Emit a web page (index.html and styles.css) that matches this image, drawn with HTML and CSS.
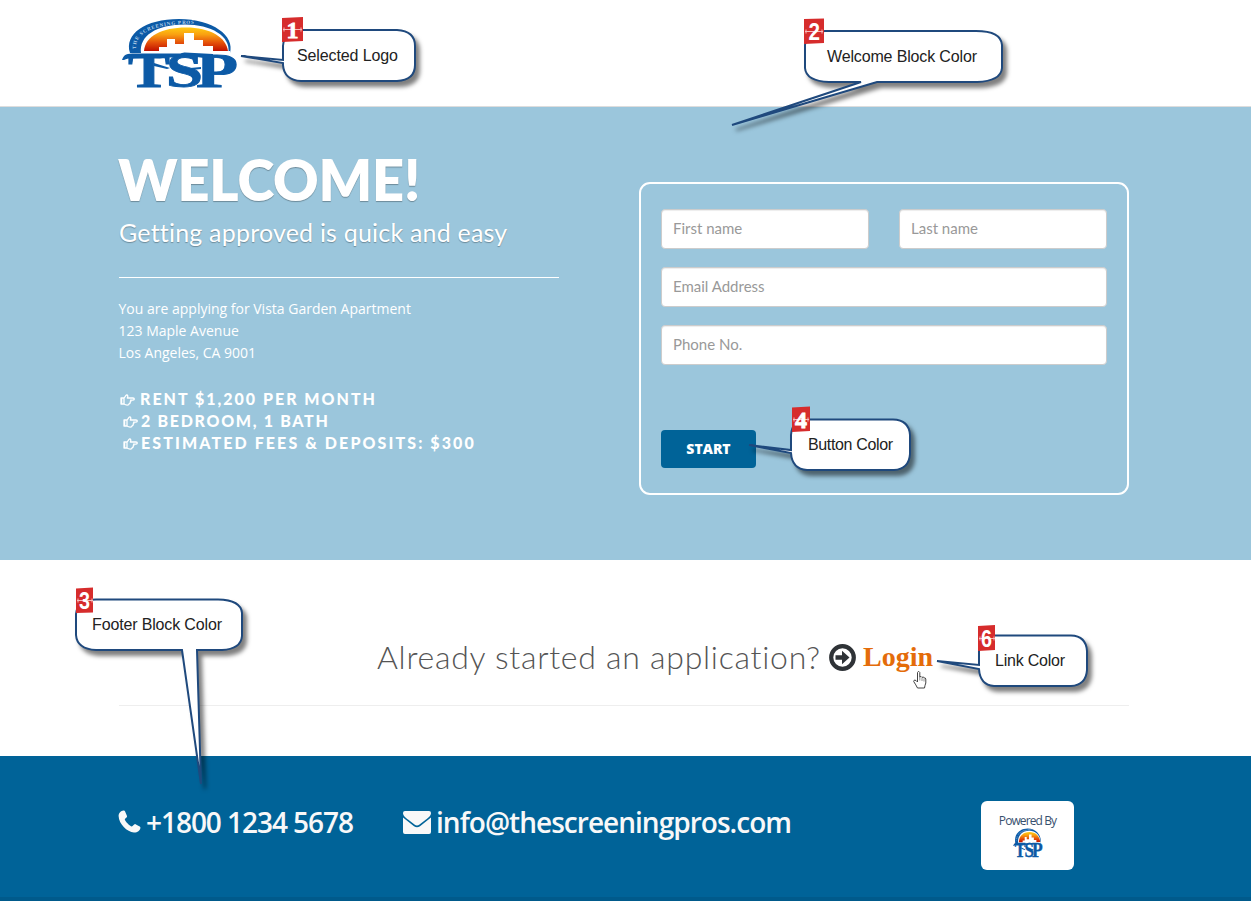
FILE: index.html
```html
<!DOCTYPE html>
<html lang="en">
<head>
<meta charset="utf-8">
<title>Welcome</title>
<link rel="stylesheet" href="styles.css">
</head>
<body>
<svg class="defs" width="0" height="0" aria-hidden="true">
  <defs>
    <linearGradient id="sunset" x1="0" y1="0" x2="0" y2="1">
      <stop offset="0" stop-color="#ffcb12"/><stop offset=".3" stop-color="#f9a011"/>
      <stop offset=".65" stop-color="#e4500a"/><stop offset="1" stop-color="#c01000"/>
    </linearGradient>
    <path id="arc" d="M15 31C13 15 35 4.500 78 6"/>
    <symbol id="logo" viewBox="0 0 118 72" preserveAspectRatio="none">
      <path d="M9 35C3 16 24 1 58 1c34 0 56 17 51 34h-1.500C110 18 90 6.500 64 6.500 35 6.500 18 18 20 35Z" fill="#0c5aa6"/>
      <path d="M23 33C24 18 41 9.500 65 9.500s40 9.500 42 23.500Z" fill="url(#sunset)"/>
      <path d="M38 36V29H46V21h8v5h9V15h10v7h9v6h10v5h17v4H23v-2h15Z" fill="#fff"/>
      <text class="logo-arc"><textPath href="#arc" textLength="70">THE SCREENING PROS</textPath></text>
      <path d="M1 42C3 36 6 35.500 14 35.500h44c4 0 3-1 6-1l28 1.500v2.500H60v1H45l-6 1H15c-7 0-8-.5-12 1.500Z" fill="#0c5aa6"/>
      <g class="logo-letters">
        <text x="7" y="68.500" textLength="42" lengthAdjust="spacingAndGlyphs">T</text>
        <text x="45" y="68.500" textLength="37" lengthAdjust="spacingAndGlyphs">S</text>
        <text x="75" y="68.500" textLength="42" lengthAdjust="spacingAndGlyphs">P</text>
      </g>
      <path d="M33 45l16 5-3 1-13-3ZM69 50l11-1v2l-10 1Z" fill="#0c5aa6"/>
    </symbol>
    <symbol id="hand" viewBox="0 0 15 12">
      <path d="M1 4h3.200l1.600-2.300Q7 .4 7.600 1.400T7.300 4H13q1.300 0 1.300 1T13 6.100H10.500q1 1.200-.4 2 .4 1.200-.9 1.500-.1 1.500-2 1.500Q5.500 11 4 10H1ZM4 4v6" fill="none" stroke="currentColor" stroke-width="1.300" stroke-linejoin="round"/>
      <path d="M1 4h1.300v6H1Z" fill="currentColor"/>
    </symbol>
  </defs>
</svg>

<header class="header"><svg class="logo"><use href="#logo"/></svg></header>

<main>
  <section class="hero">
    <div class="intro">
      <h1 class="title">WELCOME!</h1>
      <p class="subtitle">Getting approved is quick and easy</p>
      <p class="address">You are applying for Vista Garden Apartment<br>123 Maple Avenue<br>Los Angeles, CA 9001</p>
      <ul class="facts">
        <li class="fact fact-first"><svg class="hand"><use href="#hand"/></svg><span class="rent">RENT $1,200 PER MONTH</span></li>
        <li class="fact"><svg class="hand"><use href="#hand"/></svg><span class="rooms">2 BEDROOM, 1 BATH</span></li>
        <li class="fact"><svg class="hand"><use href="#hand"/></svg><span class="fees">ESTIMATED FEES &amp; DEPOSITS: $300</span></li>
      </ul>
    </div>
    <form class="signup">
      <div class="names">
        <input class="field" type="text" placeholder="First name">
        <input class="field" type="text" placeholder="Last name">
      </div>
      <input class="field" type="text" placeholder="Email Address">
      <input class="field" type="text" placeholder="Phone No.">
      <button class="start" type="button">START</button>
    </form>
  </section>

  <section class="returning">
    <span class="question">Already started an application?</span>
    <svg class="arrow" viewBox="0 0 27 27"><circle cx="13.500" cy="13.500" r="11.300" fill="none" stroke="#2f3337" stroke-width="4.200"/><path d="M6.500 11.300h6.500V6.800l7.500 6.700-7.500 6.700v-4.500H6.500Z" fill="#2f3337"/></svg>
    <a class="login">Login</a>
  </section>
</main>

<footer class="footer">
  <div class="phone"><svg class="phone-icon" viewBox="0 0 23 23"><path d="M5.500.500C3 .7.500 3 .6 6c.3 8 8.400 16 15.400 16.400 3.500.1 6-2 6.400-4.500.1-1-.3-1.200-1.200-1.700l-3.700-2c-1.500-.7-2.500 2.300-3.700 2.300C12 16.400 7 11.200 6.800 9.500c-.1-1.300 2.700-2 2.200-3.600L7.100 1.500C6.800.7 6.400.4 5.500.5Z" fill="#f8f8f8"/></svg><span class="number">+1800 1234 5678</span></div>
  <div class="mail"><svg class="mail-icon" viewBox="0 0 28 23"><path d="M0 2Q0 0 2 0h24Q28 0 28 2C28 5 25 7 23 8.500l-6.500 5q-2.500 1.800-5 0L5 8.500C3 7 0 5 0 2ZM0 6.500l11 8.800q3 2 6 0l11-8.800v14.500Q28 23 26 23h-24Q0 23 0 21Z" fill="#f8f8f8"/></svg><span class="email">info@thescreeningpros.com</span></div>
  <div class="powered"><span class="powered-text">Powered By</span><svg class="powered-logo"><use href="#logo"/></svg></div>
</footer>

<svg class="notes" viewBox="0 0 1251 901">
  <g class="bubble">
    <path d="M301 30H397Q415 31 415 46V65Q415 80 397 81H301Q284 80 283 65V63L241 56 283 60V46Q284 31 301 30Z"/>
    <path d="M825 31H976Q1001 31 1002 45V68Q1001 81 977 82H877L732 125 861 82H829Q806 81 805 68V45Q806 32 825 31Z"/>
    <path d="M96 599.500H218Q241 600 242 613V636Q241 649 222 650H197L201 784 182 650H96Q77 649 76 635V614Q77 600 96 599.500Z"/>
    <path d="M807 419.500H893Q909 420 910 435V454Q909 469 894 470H807Q792 469 791 453V453L749 445 791 450V435Q792 420 807 419.500Z"/>
    <path d="M994 635.500H1071Q1086 636 1087 651V670Q1086 685 1071 686H994Q980 685 979 669V669L937 661 979 665V651Q980 636 994 635.500Z"/>
  </g>
  <g class="badge">
    <path d="M282 18 303 17V41L282 42Z"/><path d="M804 19 824 18.500V43L804 44Z"/>
    <path d="M76 588.500 93 587.500V612.500L76 613Z"/><path d="M792 407.500 810 406.500V431L792 432Z"/>
    <path d="M978 626 995 625V650L978 651Z"/>
  </g>
  <g class="ticks"><path d="M283 29.500h19m-18-2v4m17-4v4M805 31.500h18m-17-2v4m16-4v4M77 600.500h16m-15-2v4m14-4v4M793 419.500h16m-15-2v4m14-4v4M979 638.500h16m-15-2v4m14-4v4"/></g>
  <g class="digits">
    <text class="slab" x="286.500" y="37.500" textLength="12" lengthAdjust="spacingAndGlyphs">1</text><text x="808.500" y="39.500" textLength="11.500" lengthAdjust="spacingAndGlyphs">2</text><text x="79" y="609" textLength="11" lengthAdjust="spacingAndGlyphs">3</text><text class="slab" x="795" y="427.500" textLength="12" lengthAdjust="spacingAndGlyphs">4</text><text x="981" y="647" textLength="11" lengthAdjust="spacingAndGlyphs">6</text>
  </g>
  <g class="labels">
    <text x="297" y="61" textLength="101">Selected Logo</text>
    <text x="827" y="62" textLength="150">Welcome Block Color</text>
    <text x="92" y="630" textLength="130">Footer Block Color</text>
    <text x="808" y="450" textLength="85">Button Color</text>
    <text x="995" y="666" textLength="70">Link Color</text>
  </g>
  <path d="M917.500 680V672.500Q918.500 670 919.800 672.500V677Q921 675.500 922 677.500 923.500 676 924.300 678 925.500 677.500 925.800 679V683Q925 685 924.500 688H917.500Q916 685 913.700 681.500 914 679 916 680.500L917.500 682Z" fill="#fff" stroke="#444" stroke-width="1"/>
  <path d="M919.800 677v3.500M922 678v3M924 678.500v3" stroke="#777" stroke-width=".8" fill="none"/>
</svg>
</body>
</html>
```
FILE: styles.css
```css
* { box-sizing: border-box; }
body { margin: 0; width: 1251px; height: 901px; overflow: hidden; position: relative; background: #fff; font-family: Lato, "Open Sans", sans-serif; font-variant-ligatures: none; display: flex; flex-direction: column; }
h1, p, ul { margin: 0; padding: 0; }
.defs { position: absolute; }

.header { height: 107px; border-bottom: 1px solid #ddd; padding: 18px 121px; flex: none; }
.logo { display: block; width: 118px; height: 72px; }
.logo-letters { font: bold 49px "Liberation Serif", serif; fill: #0c5aa6; stroke: #0c5aa6; stroke-width: .9; }
.logo-arc { font: bold 5px "Liberation Serif", serif; fill: #b9d3ea; }

.hero { height: 453px; background: #9bc6dc; padding: 0 122px 0 118px; display: flex; justify-content: space-between; align-items: flex-start; color: #fff; }
.intro { width: 441px; padding-top: 43px; }
.title { font-size: 56px; line-height: 60px; font-weight: 800; letter-spacing: -.2px; white-space: nowrap; text-shadow: 0 1px 1px rgba(0,0,0,.3); }
.subtitle { box-sizing: content-box; height: 30px; margin: 6px 0 20px 1px; padding: 1px 0 30px; border-bottom: 1px solid #fff; font-size: 25px; line-height: 30px; letter-spacing: .2px; white-space: nowrap; text-shadow: 0 1px 1px rgba(0,0,0,.3); }
.address { font: 14px/22px "Open Sans", sans-serif; margin-left: .5px; }
.facts { list-style: none; margin-top: 24px; font-size: 16px; line-height: 22px; font-weight: 900; }
.fact { display: flex; align-items: center; gap: 3px; padding-left: 5px; white-space: nowrap; }
.fact-first { padding-left: 2px; gap: 5px; }
.hand { width: 15px; height: 12px; margin-top: 2px; }
.rent { letter-spacing: 2px; }
.rooms { letter-spacing: 1.7px; }
.fees { letter-spacing: 2.1px; }

.signup { width: 490px; height: 313px; margin-top: 75px; border: 2px solid #fff; border-radius: 11px; padding: 25px 20px; display: flex; flex-direction: column; gap: 18px; }
.names { display: flex; gap: 30px; }
.field { width: 100%; min-width: 0; height: 40px; flex: none; border: 1px solid #ccc; border-radius: 4px; padding: 0 11px 2px; background: #fff; box-shadow: inset 0 1px 1px rgba(0,0,0,.075); font: 15px Lato, sans-serif; }
.names .field { flex: 1; }
.field::placeholder { color: #999; opacity: 1; }
.start { width: 95px; height: 38px; margin-top: 47px; border: 0; border-radius: 4px; background: #006398; color: #fff; font: 800 14px "Open Sans", sans-serif; padding: 0 0 2px; }

.returning { height: 146px; margin: 0 122px 50px 119px; border-bottom: 1px solid #eee; display: flex; justify-content: flex-start; padding: 78px 0 0 258px; white-space: nowrap; }
.question { width: 452px; margin-top: -1px; font: 300 32px/40px Lato, sans-serif; letter-spacing: .73px; color: #555; }
.arrow { width: 27px; height: 27px; margin-top: 6px; flex: none; }
.login { margin: -1px 0 0 7px; font: bold 28px/40px "Liberation Serif", serif; color: #e46c0a; }

.footer { height: 145px; background: #006398; border-bottom: 4px solid #005a8b; padding: 45px 177px 0 118px; display: flex; color: #f8f8f8; font: 600 28px/42px "Open Sans", sans-serif; white-space: nowrap; }
.phone, .mail { display: flex; align-items: flex-start; }
.phone { width: 285px; gap: 5px; }
.phone-icon { width: 23px; height: 23px; margin-top: 9px; }
.number { letter-spacing: -1.05px; }
.email { letter-spacing: -.97px; }
.mail { gap: 5px; }
.mail-icon { width: 28px; height: 23px; margin-top: 10px; }
.powered { width: 93px; height: 69px; margin-left: auto; background: #fff; border-radius: 6px; display: flex; flex-direction: column; align-items: center; padding-top: 12px; }
.powered-text { font: 12px/16px "Open Sans", sans-serif; color: #37506e; letter-spacing: -.9px; }
.powered-logo { width: 30px; height: 31px; margin-top: -1px; }

.notes { position: absolute; left: 0; top: 0; width: 1251px; height: 901px; pointer-events: none; }
.bubble path { fill: #fff; stroke: #1f497d; stroke-width: 2; filter: drop-shadow(4px 5px 2px rgba(0,0,0,.5)); }
.badge path { fill: #d62c2c; }
.ticks path { stroke: #f7baba; stroke-width: 1; fill: none; }
.digits { font: bold 24px "Liberation Sans", sans-serif; fill: #fff; }
.digits .slab { font-family: "Liberation Serif", serif; font-size: 23px; stroke: #fff; stroke-width: .8; }
.labels { font: 16px "Liberation Sans", sans-serif; fill: #222; }
```
